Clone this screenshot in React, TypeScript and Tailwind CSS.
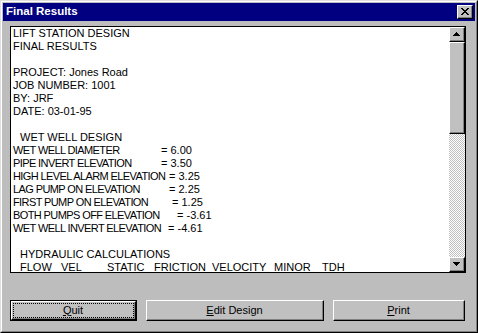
const font = { fontFamily: '"Liberation Sans", Arial, sans-serif' };

const wetWell: [string, string, number][] = [
  ['WET WELL DIAMETER', '= 6.00', 148],
  ['PIPE INVERT ELEVATION', '= 3.50', 148],
  ['HIGH LEVEL ALARM ELEVATION', '= 3.25', 156],
  ['LAG PUMP ON ELEVATION', '= 2.25', 156],
  ['FIRST PUMP ON ELEVATION', '= 1.25', 159],
  ['BOTH PUMPS OFF ELEVATION', '= -3.61', 164],
  ['WET WELL INVERT ELEVATION', '= -4.61', 155],
];

function Raised({ children, className = '' }: { children?: React.ReactNode; className?: string }) {
  return (
    <div className={`border-t border-l border-white border-r border-b border-r-black border-b-black ${className}`}>
      <div className="h-full w-full border-r border-b border-[#808080] bg-[#c0c0c0] flex items-center justify-center">
        {children}
      </div>
    </div>
  );
}

function Arrow({ down }: { down?: boolean }) {
  return (
    <svg width="7" height="4" viewBox="0 0 7 4" className={down ? 'rotate-180' : ''}>
      <path d="M3 0h1v1h1v1h1v1h1v1H0V3h1V2h1V1h1z" fill="#000" />
    </svg>
  );
}

function Button({ label, under, width, active }: { label: string; under: string; width: string; active?: boolean }) {
  const rest = label.slice(1);
  const text = (
    <span className="text-[11px] text-black leading-none">
      <span className="underline underline-offset-1">{under}</span>
      {rest}
    </span>
  );
  if (active) {
    return (
      <div className={`${width} h-[21px] border border-black`}>
        <Raised className="h-full w-full">
          <div className="h-[15px] w-[121px] border border-dotted border-black flex items-center justify-center">{text}</div>
        </Raised>
      </div>
    );
  }
  return <Raised className={`${width} h-[21px]`}>{text}</Raised>;
}

export default function App() {
  return (
    <div style={font} className="w-[478px] h-[333px] border-t border-l border-[#dfdfdf] border-r border-b border-r-black border-b-black">
      <div className="h-full w-full border-t border-l border-white border-r border-b border-r-[#808080] border-b-[#808080] bg-[#bdbdbd] p-px flex flex-col">
        <div className="h-[18px] bg-[#000080] flex items-center justify-between pl-[3px] pr-[2px]">
          <span className="text-white font-bold text-[11.5px] leading-none">Final Results</span>
          <Raised className="w-[16px] h-[14px]">
            <svg width="8" height="7" viewBox="0 0 8 7">
              <path d="M0 0h2v1h1v1h2V1h1V0h2v1H7v1H6v1H5v1h1v1h1v1h1v1H6V6H5V5H3v1H2v1H0V6h1V5h1V4h1V3H2V2H1V1H0z" fill="#000" />
            </svg>
          </Raised>
        </div>

        <div className="mt-[5px] ml-[7px] w-[456px] h-[247px] border border-black bg-white flex">
          <div className="flex-1 pl-[2px] text-[11px] leading-[13px] text-black whitespace-pre overflow-hidden">
            <div>LIFT STATION DESIGN</div>
            <div>FINAL RESULTS</div>
            <div>&nbsp;</div>
            <div>PROJECT: Jones Road</div>
            <div>JOB NUMBER: 1001</div>
            <div>BY: JRF</div>
            <div>DATE: 03-01-95</div>
            <div>&nbsp;</div>
            <div className="pl-[7px]">WET WELL DESIGN</div>
            {wetWell.map(([k, v, w]) => (
              <div key={k} className="flex">
                <span className="shrink-0 tracking-[-0.6px]" style={{ width: w }}>{k}</span>
                <span>{v}</span>
              </div>
            ))}
            <div>&nbsp;</div>
            <div className="pl-[7px]">HYDRAULIC CALCULATIONS</div>
            <div className="pl-[7px] flex">
              <span className="w-[41px] shrink-0">FLOW</span>
              <span className="w-[46px] shrink-0">VEL</span>
              <span className="w-[47px] shrink-0">STATIC</span>
              <span className="w-[58px] shrink-0">FRICTION</span>
              <span className="w-[62px] shrink-0">VELOCITY</span>
              <span className="w-[48px] shrink-0">MINOR</span>
              <span>TDH</span>
            </div>
          </div>
          <div className="w-[16px] flex flex-col">
            <Raised className="h-[15px]"><Arrow /></Raised>
            <Raised className="h-[92px]" />
            <div className="flex-1 bg-[repeating-conic-gradient(#c0c0c0_0_25%,#ffffff_0_50%)] bg-[length:2px_2px]" />
            <Raised className="h-[15px]"><Arrow down /></Raised>
          </div>
        </div>

        <div className="mt-[27px] ml-[7px] flex gap-[9px]">
          <Button label="Quit" under="Q" width="w-[127px]" active />
          <Button label="Edit Design" under="E" width="w-[178px]" />
          <Button label="Print" under="P" width="w-[132px]" />
        </div>
      </div>
    </div>
  );
}
